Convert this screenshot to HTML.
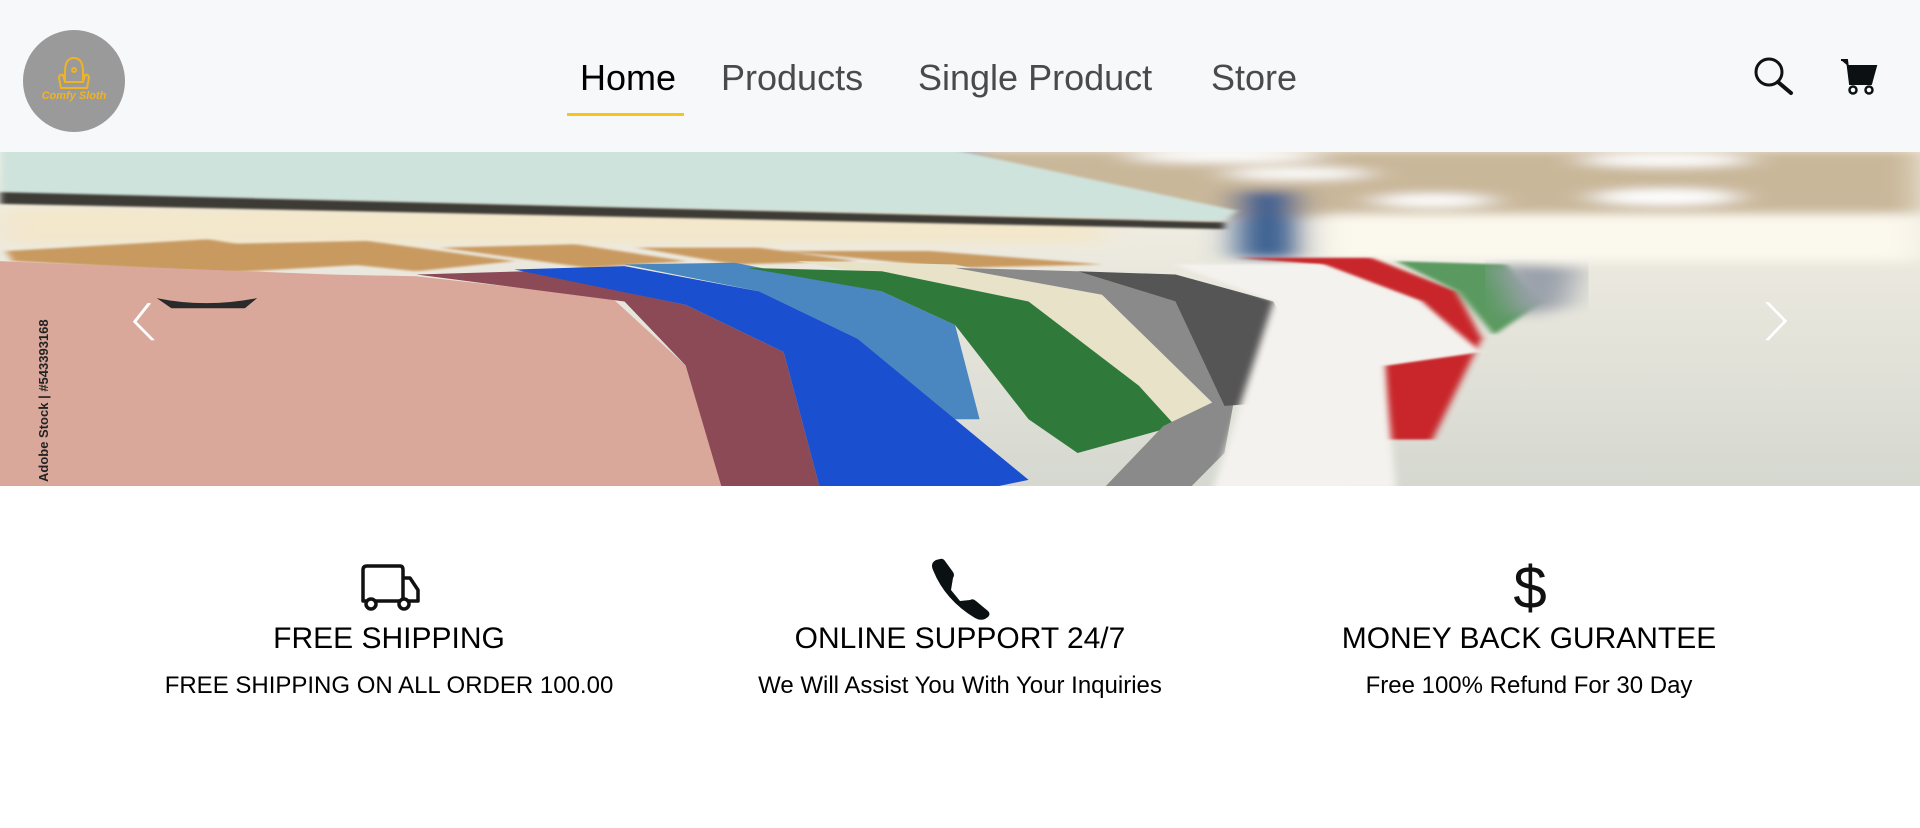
<!DOCTYPE html>
<html><head><meta charset="utf-8"><style>
*{margin:0;padding:0;box-sizing:border-box}
body{width:1920px;height:828px;background:#fff;font-family:"Liberation Sans",sans-serif;position:relative;overflow:hidden}
header{position:absolute;left:0;top:0;width:1920px;height:152px;background:#f7f8fa}
.logo{position:absolute;left:23px;top:30px;width:102px;height:102px;border-radius:50%;background:#9b9a9b}
.logo span{position:absolute;left:0;width:102px;top:60px;text-align:center;color:#f0b323;font-size:11px;font-weight:bold;font-style:italic}
.nav a{position:absolute;top:57px;font-size:36px;color:#4a4a4a;text-decoration:none;white-space:nowrap}
.ul{position:absolute;left:567px;top:113px;width:117px;height:3px;background:#f5c518}
.hero{position:absolute;left:0;top:152px;width:1920px;height:334px;overflow:hidden;background:#ece6da}
.feat{position:absolute;top:0;width:600px;text-align:center;color:#000}
.feat h3{position:absolute;top:622px;width:600px;font-size:30px;font-weight:normal;white-space:nowrap}
.feat p{position:absolute;top:672px;width:600px;font-size:24px;white-space:nowrap}
</style></head><body>
<header>
<div class="logo">
<svg width="102" height="102" viewBox="0 0 102 102" style="position:absolute;left:0;top:0"><g fill="none" stroke="#f0b323" stroke-width="2"><path d="M42 42 Q42 28 51 28 Q60 28 60 42 L60 52 L42 52Z"/><path d="M36 48 Q36 44 40 45 L42 52 L60 52 L62 45 Q66 44 66 48 L64 58 L38 58Z"/><circle cx="51" cy="40" r="2"/></g></svg>
<span>Comfy Sloth</span></div>
<div class="nav">
<a style="left:580px;color:#000">Home</a>
<a style="left:721px">Products</a>
<a style="left:918px">Single Product</a>
<a style="left:1211px">Store</a>
</div>
<div class="ul"></div>
<svg style="position:absolute;left:1750px;top:55px" width="50" height="45" viewBox="1750 55 50 45"><circle cx="1769" cy="72" r="13" fill="none" stroke="#111" stroke-width="3"/><line x1="1778" y1="82" x2="1791" y2="93" stroke="#111" stroke-width="4" stroke-linecap="round"/></svg>
<svg style="position:absolute;left:1835px;top:55px" width="50" height="45" viewBox="1835 55 50 45"><path d="M1841 60 L1847 60 L1850 84 L1871 84 L1876 66 L1848 66" fill="#0b1113" stroke="#0b1113" stroke-width="2"/><path d="M1848 66 L1876 66 L1872 84 L1850 84Z" fill="#0b1113"/><circle cx="1853" cy="90" r="3.5" fill="#fff" stroke="#0b1113" stroke-width="2.5"/><circle cx="1869" cy="90" r="3.5" fill="#fff" stroke="#0b1113" stroke-width="2.5"/></svg>
</header>
<div class="hero">
<svg width="1920" height="340" viewBox="0 0 1568 1010" preserveAspectRatio="none" style="position:absolute;left:0;top:-2px">
<defs><filter id="b"><feGaussianBlur stdDeviation="14"/></filter><filter id="s"><feGaussianBlur stdDeviation="3"/></filter>
<linearGradient id="fl" x1="0" y1="0" x2="0" y2="1"><stop offset="0" stop-color="#f6f1e6"/><stop offset="1" stop-color="#d5d8d0"/></linearGradient></defs>
<rect width="1568" height="1010" fill="url(#fl)"/>
<g filter="url(#b)">
<rect x="780" y="0" width="788" height="200" fill="#c9b79a"/>
<ellipse cx="1000" cy="20" rx="80" ry="18" fill="#fff"/><ellipse cx="1360" cy="30" rx="70" ry="20" fill="#fff"/><ellipse cx="1060" cy="70" rx="60" ry="18" fill="#fff"/><ellipse cx="1360" cy="140" rx="60" ry="25" fill="#fff"/><ellipse cx="1170" cy="150" rx="50" ry="20" fill="#fff"/>
<rect x="1080" y="190" width="488" height="140" fill="#fbf8ee"/>
<rect x="600" y="0" width="190" height="90" fill="#1a55b8"/>
<rect x="1010" y="120" width="50" height="200" fill="#3a5f90"/>
<rect x="0" y="170" width="900" height="110" fill="#f3e7cc"/>
</g>
<path d="M0 0 L780 0 L1010 180 L1000 210 L0 130Z" fill="#cfe3dd" filter="url(#s)"/>
<path d="M0 125 L1000 215 L1000 235 L0 160Z" fill="#3c3a36" filter="url(#s)"/>
<g fill="#c99a60" filter="url(#s)"><path d="M5 300 L170 265 L300 340 L180 365 L10 330Z"/><path d="M170 280 L300 270 L420 330 L340 360 L260 330Z"/><path d="M360 290 L470 280 L560 330 L480 350Z"/><path d="M520 290 L620 290 L700 330 L600 340Z"/><path d="M640 300 L760 300 L900 340 L780 350Z"/></g>
<path d="M0 330 L60 340 L270 370 L340 375 L500 440 L560 640 L610 1010 L0 1010Z" fill="#d9a89b"/>
<path d="M340 370 L430 360 L560 460 L640 600 L670 1010 L590 1010 L560 640 L510 450Z" fill="#8b4a55"/>
<path d="M510 340 L600 335 L720 420 L780 520 L800 800 L760 800 L700 560 L620 420Z" fill="#4a86c0"/>
<path d="M420 355 L510 345 L620 420 L700 560 L840 980 L800 1010 L670 1010 L640 600 L560 460Z" fill="#1a4fd0"/>
<path d="M650 330 L780 340 L900 430 L990 750 L950 820 L930 700 L840 450Z" fill="#e8e2c8"/>
<path d="M610 350 L720 360 L840 450 L930 700 L960 820 L880 900 L840 800 L780 520 L720 420Z" fill="#2f7a3a"/>
<path d="M780 350 L880 360 L960 450 L1010 700 L1000 900 L970 1010 L900 1010 L950 820 L990 750 L900 430Z" fill="#8a8a8a"/>
<path d="M880 360 L960 370 L1040 450 L1080 740 L1000 760 L960 450Z" fill="#555"/>
<path d="M1010 320 L1120 320 L1190 420 L1210 560 L1170 860 L1130 860 L1130 640 L1200 600 L1160 450 L1080 340Z" fill="#c8282c" filter="url(#s)"/>
<path d="M960 340 L1080 340 L1160 450 L1210 600 L1130 640 L1140 1000 L990 1010 L1000 900 L1040 450Z" fill="#f4f2ee" filter="url(#s)"/>
<path d="M1140 330 L1230 340 L1260 450 L1220 550 L1190 420Z" fill="#5a9a60" filter="url(#s)"/>
<path d="M1220 340 L1290 350 L1280 460 L1240 500Z" fill="#9aa0aa" filter="url(#b)"/>
<path d="M128 440 Q168 470 210 440 L200 470 L140 470Z" fill="#2a2a2a"/>
<path d="M122 455 L110 510 L125 565" fill="none" stroke="#fff" stroke-width="3"/>
<path d="M1443 452 L1458 508 L1443 565" fill="none" stroke="#fff" stroke-width="3"/>
</svg>
<div style="position:absolute;left:36px;top:330px;transform-origin:0 0;transform:rotate(-90deg);font-size:13px;color:#222;white-space:nowrap;font-weight:bold">Adobe Stock | #543393168</div>
</div>
<svg style="position:absolute;left:355px;top:560px" width="70" height="55" viewBox="355 560 70 55"><g fill="none" stroke="#111" stroke-width="3.5" stroke-linejoin="round"><path d="M363 601 L363 570 Q363 566 367 566 L400 566 Q403 566 403 570 L403 601 Z"/><path d="M403 578 L410 578 L418 590 L418 601 L403 601"/></g><circle cx="371" cy="604" r="5" fill="#fff" stroke="#111" stroke-width="3.5"/><circle cx="404" cy="604" r="5" fill="#fff" stroke="#111" stroke-width="3.5"/></svg>
<svg style="position:absolute;left:925px;top:555px" width="70" height="66" viewBox="925 555 70 66"><path d="M933 570 Q930 563 936 560 L940 559 Q943 558 945 561 L953 572 Q955 575 953 578 L951 590 L960 601 L970 600 Q973 598 976 601 L988 611 Q991 614 988 617 L985 619 Q980 621 975 618 Q945 600 933 570Z" fill="#0b1113"/></svg>
<div style="position:absolute;left:1500px;top:553px;width:60px;text-align:center;font-size:60px;color:#111">$</div>
<div class="feat" style="left:89px"><h3>FREE SHIPPING</h3><p>FREE SHIPPING ON ALL ORDER 100.00</p></div>
<div class="feat" style="left:660px"><h3>ONLINE SUPPORT 24/7</h3><p>We Will Assist You With Your Inquiries</p></div>
<div class="feat" style="left:1229px"><h3>MONEY BACK GURANTEE</h3><p>Free 100% Refund For 30 Day</p></div>
</body></html>
